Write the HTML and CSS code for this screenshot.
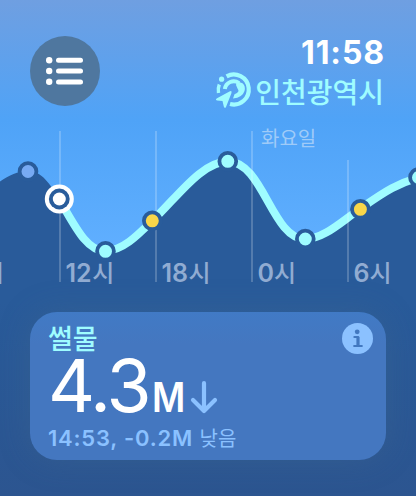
FILE: index.html
```
<!doctype html>
<html lang="ko">
	<head>
		<meta charset="UTF-8">
		<title>물때</title>
		<link rel="stylesheet" href="styles.css">
	</head>

	<body>
		<div class="watch">
			<header class="header">
				<button class="menu" aria-label="목록">
					<svg width="38" height="30" viewBox="0 0 38 30">
						<g fill="#fff">
							<circle cx="3.2" cy="4.2" r="3.2"/>
							<circle cx="3.2" cy="15" r="3.2"/>
							<circle cx="3.2" cy="25.8" r="3.2"/>
							<rect x="10" y="1.8" width="27" height="5" rx="2.5"/>
							<rect x="10" y="12.6" width="27" height="5" rx="2.5"/>
							<rect x="10" y="23.4" width="27" height="5" rx="2.5"/>
						</g>
					</svg>
				</button>

				<div class="status">
					<div class="clock">11:58</div>
					<div class="place">
						<svg width="36" height="38" viewBox="215 71 36 38">
							<g fill="none" stroke="#9ffcff">
								<path d="M226.6 76.3A15 15 0 1 1 230 104" stroke-width="4.2"/>
								<path d="M219.3 84.5A15 15 0 0 0 218.5 93" stroke-width="3.4"/>
								<path d="M224.8 89A9 9 0 0 1 239 83" stroke-width="4"/>
							</g>
							<circle cx="221.6" cy="79.2" r="2.6" fill="#9ffcff"/>
							<path d="M237 81.3L242.5 83.2Q245.8 86 244.5 91Q242.5 97.5 233 98.5L234.5 94.3Q240.5 92 237.5 88.5L236 85Z" fill="#9ffcff"/>
							<path d="M217 98.3L229.5 91.5Q232.3 90.2 231.4 93.2L226 107Q224.8 109 223.8 106.6L222.5 101L217 100.5Q214.8 99.6 217 98.3Z" fill="#9ffcff"/>
						</svg>
						<span>인천광역시</span>
					</div>
				</div>
			</header>

			<svg class="chart" width="416" height="180" viewBox="0 120 416 180">
				<path class="sea" d="M-10 188C4 179 14 171 28 171C42 171 50 184 59 199C74 224 86 251 105 251C122 251 137 236 152 221C176 199 201 161.5 228 161.5C263 161.5 272 239 305 239C324 239 342 221 360 209C380 195 399 181 426 176V300H-10Z"/>
				<path class="tide" d="M59 199C74 224 86 251 105 251C122 251 137 236 152 221C176 199 201 161.5 228 161.5C263 161.5 272 239 305 239C324 239 342 221 360 209C380 195 399 181 426 176"/>

				<g class="grid">
					<rect x="59" y="131" width="2" height="151"/>
					<rect x="155" y="131" width="2" height="151"/>
					<rect x="251" y="131" width="2" height="151"/>
					<rect x="347" y="160" width="2" height="122"/>
				</g>

				<g class="hours">
					<text x="-18" y="282"><tspan>시</tspan></text>
					<text x="65.5" y="282">12<tspan dx=".5">시</tspan></text>
					<text x="161.5" y="282">18<tspan dx=".5">시</tspan></text>
					<text x="257.5" y="282">0<tspan>시</tspan></text>
					<text x="353.5" y="282">6<tspan>시</tspan></text>
				</g>
				<text class="day" x="261" y="146">화요일</text>

				<g class="points">
					<circle class="past" cx="28" cy="171.5" r="8.4"/>
					<circle class="high" cx="105.5" cy="251.3" r="8.4"/>
					<circle class="sun" cx="152.3" cy="220.8" r="8.4"/>
					<circle class="high" cx="227.8" cy="161.3" r="8.4"/>
					<circle class="high" cx="305.3" cy="239" r="8.4"/>
					<circle class="sun" cx="360.4" cy="209.3" r="8.4"/>
					<circle class="high" cx="418.5" cy="177.5" r="8.4"/>
				</g>

				<circle cx="59.3" cy="199" r="14.5" fill="#fff"/>
				<circle cx="59.3" cy="199" r="10.4" fill="#295c9b"/>
				<circle cx="59.3" cy="199" r="6.5" fill="#fff"/>
			</svg>

			<section class="card">
				<div class="info">
					<svg width="31" height="31" viewBox="0 0 31 31">
						<circle cx="15.5" cy="15.5" r="15.5" fill="#8bc1ff"/>
						<circle cx="15.2" cy="8.8" r="2.4" fill="#4278c0"/>
						<path d="M12.4 14H16.2V23M12.2 23H19.8" fill="none" stroke="#4278c0" stroke-width="2.2" stroke-linecap="round" stroke-linejoin="round"/>
						<path d="M15.9 14V23" stroke="#4278c0" stroke-width="3"/>
					</svg>
				</div>
				<div class="state">썰물</div>
				<div class="level">
					<span class="value">4.3</span><span class="unit">M</span>
					<svg class="arrow" width="28" height="31" viewBox="0 0 28 31">
						<path d="M14 2.2V29.5M3 19L14 30L25 19" fill="none" stroke="#8bc1ff" stroke-width="4.2" stroke-linecap="round" stroke-linejoin="round"/>
					</svg>
				</div>
				<div class="next">14:53, -0.2M <span class="low">낮음</span></div>
			</section>
		</div>
	</body>
</html>
```
FILE: styles.css
```
* {
	padding: 0;
	margin: 0;
	box-sizing: border-box;
}
body {
	font-family: Inter, 'Noto Sans CJK KR', sans-serif;
	color: #fff;
}
svg {
	display: block;
	flex: none;
	overflow: visible;
}
.watch {
	width: 416px;
	height: 496px;
	overflow: hidden;
	background: linear-gradient(#6f9fe1 0, #4fa3f7 120px, #60afff 250px, #295b9a 290px, #295b9a 300px, #2c5590 496px);
}
.header {
	display: flex;
	justify-content: space-between;
	height: 120px;
	padding: 36px 32px 0 30px;
}
.menu {
	display: flex;
	align-items: center;
	width: 70px;
	height: 70px;
	padding-left: 16px;
	border: none;
	border-radius: 50%;
	background: #4f779f;
}
.status {
	text-align: right;
}
.clock {
	height: 35px;
	line-height: 33px;
	font-size: 32px;
	font-weight: 700;
	letter-spacing: .9px;
	margin-right: -1px;
}
.place {
	display: flex;
	justify-content: flex-end;
	gap: 4px;
	height: 38px;
	line-height: 41px;
	font-family: 'Noto Sans CJK KR', sans-serif;
	font-size: 28px;
	font-weight: 500;
	color: #9ffcff;
}
.chart {
	overflow: hidden;
	font-family: Inter, 'Noto Sans CJK KR', sans-serif;
}
.sea {
	fill: #295b9a;
}
.tide {
	fill: none;
	stroke: #9ffcff;
	stroke-width: 8;
}
.grid {
	fill: #fff;
	opacity: .2;
}
.hours {
	fill: #91acd2;
	font-size: 25px;
	font-weight: 600;
}
.hours tspan {
	font-size: 24px;
	font-weight: 500;
}
.day {
	fill: #9fcbf8;
	font-size: 20px;
	font-weight: 400;
}
.points {
	stroke: #295c9b;
	stroke-width: 3.8;
}
.past {
	fill: #77aaf3;
}
.high {
	fill: #9ffcff;
}
.sun {
	fill: #f9d649;
}
.card {
	position: relative;
	width: 356px;
	height: 148px;
	margin: 12px 30px 0;
	padding: 11px 18px 0;
	border-radius: 27px;
	background: linear-gradient(#417ac5, #4477c0 32px);
	box-shadow: 0 0 30px rgba(70, 105, 140, .35);
}
.info {
	position: absolute;
	top: 11px;
	right: 13px;
}
.state {
	height: 29px;
	line-height: 29px;
	font-family: 'Noto Sans CJK KR', sans-serif;
	font-size: 27px;
	font-weight: 500;
	color: #9ffcff;
}
.level {
	display: flex;
	align-items: baseline;
	height: 73px;
	line-height: 67px;
}
.value {
	font-size: 73px;
	letter-spacing: -2.6px;
}
.unit {
	margin-left: 3px;
	font-size: 41px;
	font-weight: 600;
	transform: scaleX(.88);
	transform-origin: left;
}
.arrow {
	margin-left: 0;
}
.next {
	height: 24px;
	line-height: 25px;
	font-size: 22px;
	font-weight: 600;
	letter-spacing: .8px;
	color: #8bc1ff;
}
.low {
	font-family: 'Noto Sans CJK KR', sans-serif;
	font-size: 20px;
	font-weight: 400;
	letter-spacing: 0;
}
```
